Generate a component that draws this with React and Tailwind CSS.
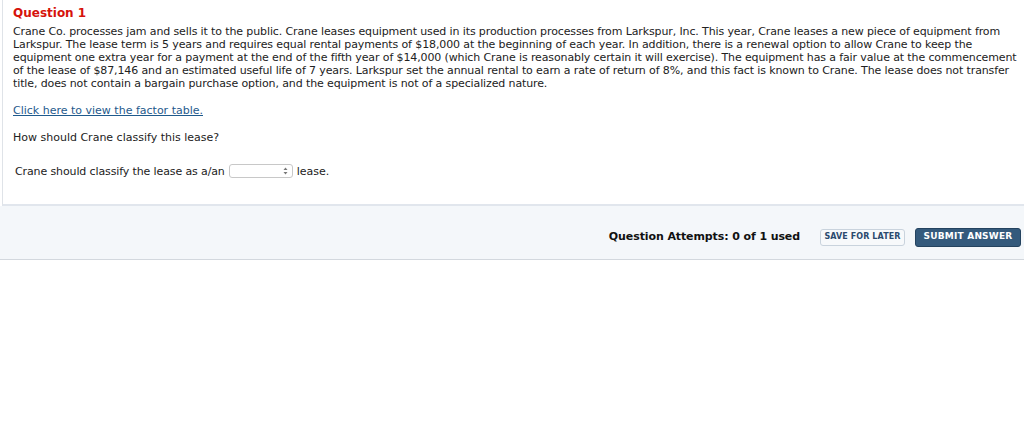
import React from 'react';

const font = { fontFamily: '"DejaVu Sans", Verdana, sans-serif' };

const App = () => {
  return (
    <div className="w-[1024px] h-[445px] bg-white text-[11px] text-[#222]" style={font}>
      {/* Question box */}
      <div className="ml-[2px] border-l border-[#dfe3e8] pl-[10px] pr-0 pt-[6px] pb-[26px] border-b-2 border-b-[#e1e6ed]">
        <div className="text-[#d6120b] font-bold text-[12px] leading-[14px] mb-[5px]">Question 1</div>
        <p className="leading-[13px] tracking-[-0.12px]">
          Crane Co. processes jam and sells it to the public. Crane leases equipment used in its production processes from Larkspur, Inc. This year, Crane leases a new piece of equipment from Larkspur. The lease term is 5 years and requires equal rental payments of $18,000 at the beginning of each year. In addition, there is a renewal option to allow Crane to keep the equipment one extra year for a payment at the end of the fifth year of $14,000 (which Crane is reasonably certain it will exercise). The equipment has a fair value at the commencement of the lease of $87,146 and an estimated useful life of 7 years. Larkspur set the annual rental to earn a rate of return of 8%, and this fact is known to Crane. The lease does not transfer title, does not contain a bargain purchase option, and the equipment is not of a specialized nature.
        </p>
        <a href="#" className="block mt-[14px] leading-[13px] text-[#1f5a8c] underline">
          Click here to view the factor table.
        </a>
        <p className="mt-[14px] leading-[13px]">How should Crane classify this lease?</p>
        <div className="mt-[20px] ml-[2px] flex items-center gap-[4px] leading-[13px]">
          <span className="tracking-[-0.12px]">Crane should classify the lease as a/an</span>
          <span className="relative inline-block w-[64px] h-[14px] border border-[#c8c8c8] rounded-[3px] bg-white">
            <svg className="absolute right-[4px] top-[2px]" width="5" height="8" viewBox="0 0 5 8">
              <path d="M0.5 3 L2.5 0.5 L4.5 3 Z" fill="#777" />
              <path d="M0.5 5 L2.5 7.5 L4.5 5 Z" fill="#777" />
            </svg>
          </span>
          <span>lease.</span>
        </div>
      </div>

      {/* Footer */}
      <div className="h-[54px] pt-[9px] bg-[#f4f7fa] border-b border-[#d3d8de] flex items-center justify-end pr-[3px]">
        <span className="font-bold text-[11px] text-[#111] mr-[20px] tracking-[-0.1px]">Question Attempts: 0 of 1 used</span>
        <button className="h-[17px] w-[85px] mr-[10px] bg-[#f7f9fb] border border-[#c9d3dd] rounded-[3px] text-[#2b4a6e] font-bold text-[8px] tracking-[0.1px]">
          SAVE FOR LATER
        </button>
        <button className="h-[19px] w-[106px] bg-[#345a7c] border border-[#24435f] rounded-[3px] text-white font-bold text-[9px] tracking-[0.2px]">
          SUBMIT ANSWER
        </button>
      </div>
    </div>
  );
};

export default App;
